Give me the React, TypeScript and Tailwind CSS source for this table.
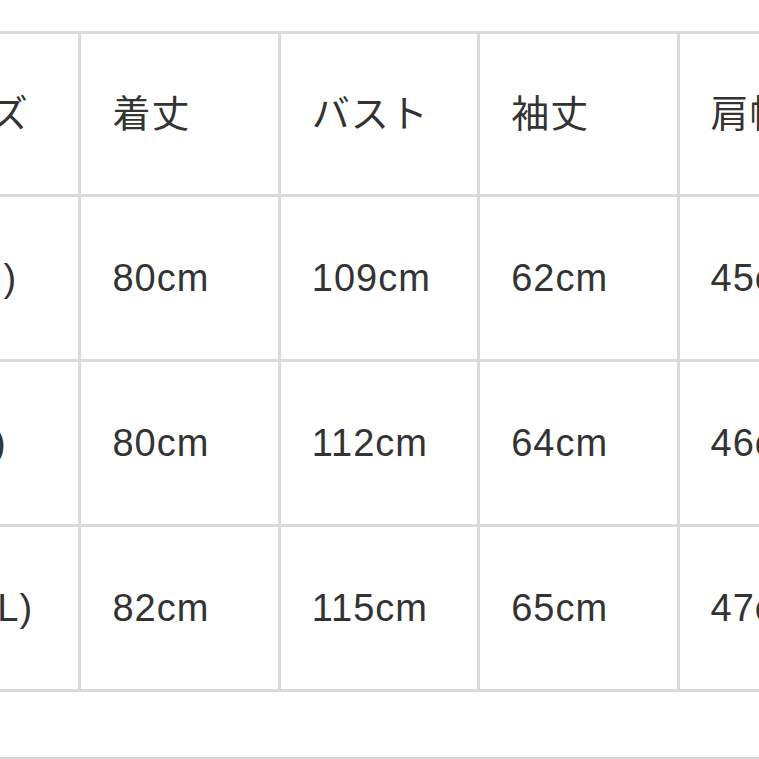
import React from 'react';

const HEAD = ['サイズ', '着丈', 'バスト', '袖丈', '肩幅'];

const ROWS = [
  ['01(M)', '80cm', '109cm', '62cm', '45cm'],
  ['02(L)', '80cm', '112cm', '64cm', '46cm'],
  ['03(XL)', '82cm', '115cm', '65cm', '47cm'],
];

const Cell: React.FC<{ text: string; head?: boolean }> = ({ text, head }) => (
  <div
    className={`bg-white flex items-center pl-[31px] whitespace-nowrap overflow-hidden ${head ? 'h-[160px]' : 'h-[162px]'}`}
  >
    <span className="text-[38px] leading-none tracking-[1px] text-[#333333]">{text}</span>
  </div>
);

export default function App() {
  return (
    <div
      className="w-[759px] h-[759px] overflow-hidden bg-white"
      style={{ fontFamily: '"Liberation Sans", "Noto Sans CJK JP", sans-serif' }}
    >
      <div className="pt-[31px] ml-[-121px]">
        {/* size table */}
        <div className="grid grid-cols-[repeat(5,196.4px)] gap-[3px] p-[3px] bg-[#dadada] w-max">
          {HEAD.map(h => (
            <Cell key={h} text={h} head />
          ))}
          {ROWS.map(r => r.map((c, i) => <Cell key={r[0] + i} text={c} />))}
        </div>
      </div>
      <div className="h-[65px]" />
      <div className="h-[2px] bg-[#d4d4d4]" />
    </div>
  );
}
